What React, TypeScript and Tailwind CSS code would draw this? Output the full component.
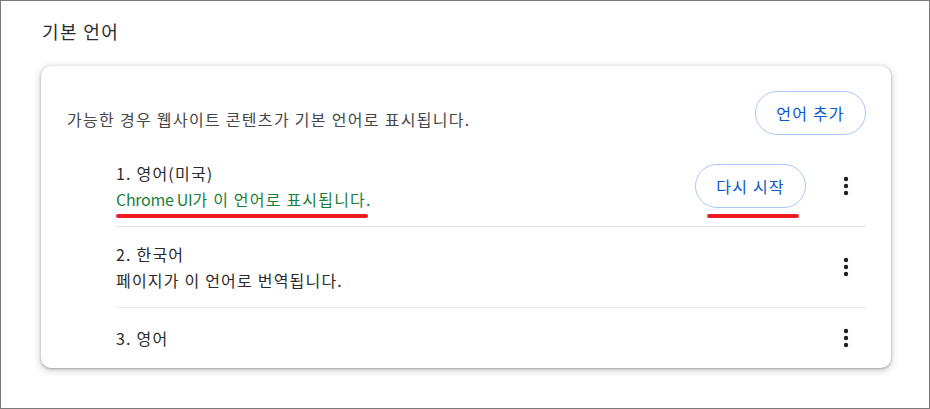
import React from "react";

const font = { fontFamily: '"Noto Sans CJK KR", "Noto Sans", sans-serif' };

function Kebab() {
  return (
    <div className="flex h-[40px] w-[40px] items-center justify-center">
      <svg width="20" height="20" viewBox="0 0 20 20" fill="#1f1f1f">
        <circle cx="10" cy="3" r="2.2" />
        <circle cx="10" cy="10" r="2.2" />
        <circle cx="10" cy="17" r="2.2" />
      </svg>
    </div>
  );
}

function PillButton({ label, marked }: { label: string; marked?: boolean }) {
  return (
    <div className="relative">
      <button
        type="button"
        className="flex h-[44px] w-[111px] items-center justify-center rounded-full border border-[#a8c7fa] bg-white text-[16px] tracking-[1.2px] text-[#0b57d0]"
      >
        {label}
      </button>
      {marked && (
        <div className="absolute left-[12px] top-[50px] h-[4px] w-[92px] rounded-full bg-[#ed1c24]" />
      )}
    </div>
  );
}

export default function App() {
  return (
    <div
      className="h-[409px] w-[930px] border border-[#7a7a7a] bg-white pl-[40px] pt-[18px]"
      style={font}
    >
      <h2 className="pl-[1px] text-[18px] font-normal leading-[24px] tracking-[1.4px] text-[#2b2b2b]">
        기본 언어
      </h2>

      <div className="mt-[23px] w-[850px] rounded-[10px] bg-white shadow-[0_1px_3px_rgba(0,0,0,0.3),0_2px_7px_2px_rgba(0,0,0,0.12)]">
        <div className="flex h-[80px] items-start justify-between pl-[26px] pr-[25px] pt-[25px]">
          <p className="mt-[15px] text-[16px] leading-[26px] tracking-[1.3px] text-[#444746]">
            가능한 경우 웹사이트 콘텐츠가 기본 언어로 표시됩니다.
          </p>
          <PillButton label="언어 추가" />
        </div>

        <div className="ml-[75px] mr-[25px]">
          <div className="flex h-[81px] items-center border-b border-[#e8e8e8] pb-[1px]">
            <div className="flex-1 text-[16px] leading-[26px] tracking-[1.2px]">
              <div className="text-[#2b2b2b]">1. 영어(미국)</div>
              <div className="relative text-[#188038]">
                <span className="tracking-[-0.3px]">Chrome UI</span>가 이 언어로 표시됩니다.
                <div className="absolute left-0 top-[28px] h-[4px] w-[252px] rounded-full bg-[#ed1c24]" />
              </div>
            </div>
            <PillButton label="다시 시작" marked />
            <div className="ml-[20px]">
              <Kebab />
            </div>
          </div>

          <div className="flex h-[81px] items-center border-b border-[#e8e8e8] pb-[1px]">
            <div className="flex-1 text-[16px] leading-[26px] tracking-[1.2px] text-[#2b2b2b]">
              <div>2. 한국어</div>
              <div>페이지가 이 언어로 번역됩니다.</div>
            </div>
            <Kebab />
          </div>

          <div className="flex h-[60px] items-center">
            <div className="flex-1 text-[16px] leading-[26px] tracking-[1.2px] text-[#2b2b2b]">3. 영어</div>
            <Kebab />
          </div>
        </div>
      </div>
    </div>
  );
}
